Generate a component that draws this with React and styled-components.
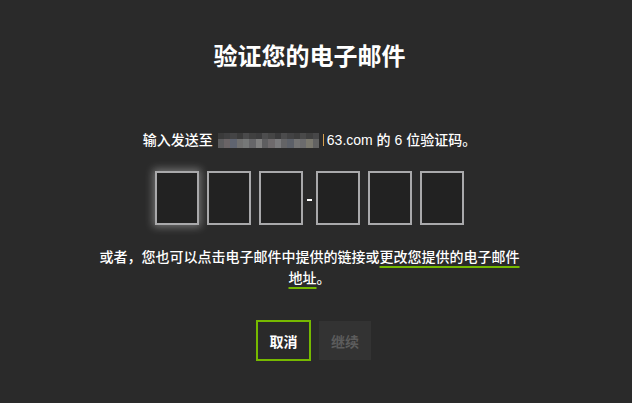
import React from 'react';
import styled, { createGlobalStyle } from 'styled-components';

const GlobalStyle = createGlobalStyle`
  html, body {
    margin: 0;
    padding: 0;
    background: #2a2a2a;
  }
  body {
    font-family: "Liberation Sans", "Noto Sans CJK SC", sans-serif;
    color: #ffffff;
  }
`;

const Page = styled.div`
  width: 619px;
  height: 403px;
  display: flex;
  flex-direction: column;
  align-items: center;
  padding-top: 40px;
  box-sizing: border-box;
`;

const Title = styled.h1`
  margin: 0;
  font-size: 24px;
  line-height: 34px;
  font-weight: 700;
`;

const Prompt = styled.p`
  margin: 56px 0 0;
  font-size: 14px;
  line-height: 20px;
  font-weight: 500;
  display: flex;
  align-items: center;
  white-space: pre;
`;

const Masked = styled.span`
  display: inline-flex;
  flex-direction: column;
  width: 101px;
  height: 15px;
  margin: 0 4px 0 5px;
`;

const MaskRow = styled.span`
  display: flex;
  flex: ${(p) => p.$grow};
`;

const MaskCell = styled.span`
  flex: 1;
`;

const Caret = styled.span`
  display: inline-block;
  width: 1px;
  height: 12px;
  background: #d6a050;
  margin-right: 3px;
`;

const CodeRow = styled.div`
  display: flex;
  align-items: center;
  margin-top: 21px;
`;

const CodeBox = styled.div`
  width: 44px;
  height: 54px;
  box-sizing: border-box;
  margin: 0 4px;
  background: #222222;
  border: 2px solid #a9a9ab;
  box-shadow: ${(p) => (p.$focused ? '0 0 8px 2px rgba(255,255,255,0.35)' : 'none')};
`;

const Dash = styled.span`
  width: 5px;
  height: 2px;
  margin-top: 4px;
  background: #ffffff;
`;

const Note = styled.p`
  margin: 22px 0 0;
  width: 430px;
  text-align: center;
  font-size: 14px;
  line-height: 21px;
  font-weight: 500;
`;

const Link = styled.a`
  color: #ffffff;
  text-decoration: underline;
  text-decoration-color: #76b900;
  text-decoration-thickness: 2px;
  text-underline-offset: 4px;
  cursor: pointer;
`;

const Actions = styled.div`
  display: flex;
  align-items: center;
  gap: 8px;
  margin-top: 31px;
  margin-left: 8px;
`;

const Button = styled.button`
  box-sizing: border-box;
  font-family: inherit;
  font-size: 14px;
  font-weight: 700;
  display: flex;
  align-items: center;
  justify-content: center;
  padding: 0;
  cursor: pointer;
`;

const CancelButton = styled(Button)`
  width: 55px;
  height: 41px;
  background: transparent;
  color: #ffffff;
  border: 2px solid #76b900;
`;

const ContinueButton = styled(Button)`
  width: 52px;
  height: 39px;
  background: #333333;
  color: #5c5c5c;
  border: none;
  cursor: default;
`;

const topCells = ['#3a3a3a', '#3f3f40', '#444445', '#3b3b3b', '#4a4a4b', '#404040', '#3c3c3d', '#4d4d4e', '#454545', '#3a3a3b', '#4b4b4c', '#424243', '#3d3d3d', '#494949', '#3f3f3f', '#474748'];
const bottomCells = ['#5c5c5e', '#6a6466', '#5f6470', '#707070', '#767878', '#666669', '#808080', '#5e5e60', '#6e6a6c', '#7a7a7c', '#646466', '#5c6068', '#737373', '#6b6b6d', '#7a786e', '#626262'];

export default function App() {
  return (
    <>
      <GlobalStyle />
      <Page>
        <Title>验证您的电子邮件</Title>
        <Prompt>
          输入发送至
          <Masked>
            <MaskRow $grow={6}>
              {topCells.map((c, i) => (
                <MaskCell key={i} style={{ background: c }} />
              ))}
            </MaskRow>
            <MaskRow $grow={9}>
              {bottomCells.map((c, i) => (
                <MaskCell key={i} style={{ background: c }} />
              ))}
            </MaskRow>
          </Masked>
          <Caret />
          63.com 的 6 位验证码。
        </Prompt>
        <CodeRow>
          <CodeBox $focused />
          <CodeBox />
          <CodeBox />
          <Dash />
          <CodeBox />
          <CodeBox />
          <CodeBox />
        </CodeRow>
        <Note>
          或者，您也可以点击电子邮件中提供的链接或<Link>更改您提供的电子邮件地址</Link>。
        </Note>
        <Actions>
          <CancelButton>取消</CancelButton>
          <ContinueButton>继续</ContinueButton>
        </Actions>
      </Page>
    </>
  );
}
